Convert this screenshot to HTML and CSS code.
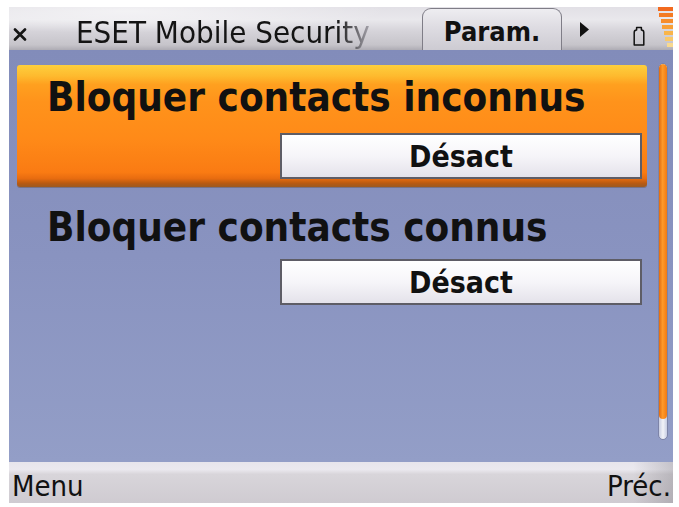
FILE: index.html
```html
<!DOCTYPE html>
<html lang="fr">
<head>
<meta charset="utf-8">
<title>ESET Mobile Security</title>
<link rel="stylesheet" href="styles.css">
</head>
<body>
<div class="screen">
  <header class="titlebar">
    <svg class="close-icon" width="14" height="13" viewBox="0 0 14 13" aria-hidden="true">
      <path d="M2 1.5 L12 11.5 M12 1.5 L2 11.5" stroke="#141414" stroke-width="2.6" stroke-linecap="round"/>
    </svg>
    <span class="app-title">ESET Mobile Security</span>
    <span class="tab">Param.</span>
    <svg class="tab-arrow" width="9" height="15" viewBox="0 0 9 15" aria-hidden="true">
      <path d="M0 0 L9 7.5 L0 15 Z" fill="#111"/>
    </svg>
    <svg class="battery" width="12" height="20" viewBox="0 0 12 20" aria-hidden="true">
      <path d="M1.2 19 V6.5 Q1.2 4 3.6 4 V1.5 H8.4 V4 Q10.8 4 10.8 6.5 V19 Z" fill="none" stroke="#111" stroke-width="1.5" stroke-linejoin="round"/>
    </svg>
    <svg class="signal" width="17" height="42" viewBox="0 0 17 42" aria-hidden="true">
      <rect x="2" y="0" width="15" height="4" fill="#f26a1f"/>
      <rect x="3" y="6" width="14" height="4" fill="#f47b24"/>
      <rect x="5" y="12" width="12" height="4" fill="#f68d2c"/>
      <rect x="6" y="18" width="11" height="4" fill="#f8a036"/>
      <rect x="8" y="24" width="9" height="4" fill="#f9b54a"/>
      <rect x="9" y="30" width="8" height="4" fill="#f9c86a"/>
      <rect x="11" y="36" width="6" height="4" fill="#f8d98f"/>
    </svg>
  </header>

  <main class="content">
    <ul class="settings">
      <li class="setting is-focused">
        <div class="setting-label">Bloquer contacts inconnus</div>
        <div class="setting-value">Désact</div>
      </li>
      <li class="setting">
        <div class="setting-label">Bloquer contacts connus</div>
        <div class="setting-value">Désact</div>
      </li>
    </ul>
    <div class="scrollbar">
      <div class="scroll-thumb"></div>
    </div>
  </main>

  <footer class="softkeys">
    <span class="softkey">Menu</span>
    <span class="softkey">Préc.</span>
  </footer>
</div>
</body>
</html>
```

FILE: styles.css
```css
* {
  box-sizing: border-box;
}

html, body {
  margin: 0;
  padding: 0;
  background: #ffffff;
}

body {
  font-family: "DejaVu Sans Condensed", "DejaVu Sans", "Liberation Sans", sans-serif;
  color: #111111;
}

.screen {
  margin: 7px 0 0 9px;
  width: 664px;
  height: 496px;
  display: flex;
  flex-direction: column;
  overflow: hidden;
}

/* ---- status / title bar ---- */
.titlebar {
  height: 43px;
  flex: none;
  display: flex;
  align-items: center;
  background:
    radial-gradient(ellipse 260px 22px at 120px 4px, rgba(255, 255, 255, 0.55), rgba(255, 255, 255, 0) 100%),
    linear-gradient(to bottom, #e2e0e6 0%, #e9e8ec 30%, #d6d4da 55%, #c6c4ca 88%, #aeacb4 100%);
}

.close-icon {
  margin-left: 4px;
  margin-top: 12px;
  flex: none;
}

.app-title {
  margin-left: 49px;
  margin-top: 6px;
  width: 310px;
  flex: none;
  font-size: 31px;
  line-height: 38px;
  white-space: nowrap;
  background: linear-gradient(to right, #141414 0%, #141414 84%, #9a98a0 94%, #c9c7cd 100%);
  -webkit-background-clip: text;
  background-clip: text;
  color: transparent;
}

.tab {
  align-self: flex-end;
  margin-left: 36px;
  width: 140px;
  height: 42px;
  flex: none;
  display: flex;
  align-items: center;
  justify-content: center;
  padding-top: 4px;
  font-weight: bold;
  font-size: 27px;
  border: 1px solid #7f7d87;
  border-bottom: none;
  border-radius: 9px 9px 0 0;
  background: linear-gradient(to bottom, #eeedf1 0%, #dedce2 45%, #cdcbd2 100%);
}

.tab-arrow {
  margin-left: 18px;
  margin-top: 2px;
  flex: none;
}

.battery {
  margin-left: 44px;
  margin-top: 14px;
  flex: none;
}

.signal {
  margin-left: 11px;
  margin-top: -2px;
  flex: none;
}

/* ---- settings list ---- */
.content {
  flex: 1;
  display: flex;
  gap: 11px;
  padding: 13px 5px 0 8px;
  background: linear-gradient(to bottom, #828cba 0%, #8993c0 50%, #939ec7 100%);
}

.settings {
  list-style: none;
  margin: 2px 0 0;
  padding: 0;
  width: 630px;
  display: flex;
  flex-direction: column;
  gap: 4px;
}

.setting {
  height: 122px;
  padding: 8px 5px 0 30px;
  border-radius: 3px;
}

.setting.is-focused {
  background: linear-gradient(to bottom,
    #fdcf3e 0%, #feba2e 9%, #ffa01f 16%, #ff931b 30%,
    #ff8a18 60%, #fa7b13 88%, #e86c10 93%, #b85a12 97%, #9c5a22 100%);
  box-shadow: 0 1px 0 rgba(90, 60, 40, 0.35);
}

.setting-label {
  font-weight: bold;
  font-size: 40px;
  line-height: 48px;
  white-space: nowrap;
}

.setting:not(.is-focused) .setting-label {
  margin-top: 4px;
}

.setting-value {
  margin: 12px 0 0 233px;
  height: 46px;
  display: flex;
  align-items: center;
  justify-content: center;
  font-weight: bold;
  font-size: 30px;
  border: 2px solid #5e5d66;
  background: linear-gradient(to bottom, #ffffff 0%, #f6f5f9 50%, #e4e2ea 100%);
}

.setting:not(.is-focused) .setting-value {
  margin-top: 8px;
}

/* ---- scroll indicator ---- */
.scrollbar {
  width: 10px;
  height: 377px;
  flex: none;
  border-radius: 5px;
  border: 1px solid #7d84a8;
  background: linear-gradient(to right, #c7cde3, #f2f3f8 50%, #c7cde3);
  overflow: hidden;
}

.scroll-thumb {
  height: 355px;
  border-radius: 4px;
  background: linear-gradient(to right, #e06a10, #ff9a2a 45%, #f07a14);
}

/* ---- softkey bar ---- */
.softkeys {
  height: 41px;
  flex: none;
  display: flex;
  justify-content: space-between;
  align-items: center;
  padding: 6px 2px 0 3px;
  font-size: 29px;
  line-height: 34px;
  background:
    linear-gradient(to right, rgba(0, 0, 0, 0) 94%, rgba(90, 88, 96, 0.25) 100%),
    linear-gradient(to bottom, #e7e5ec 0%, #ebe9ef 18%, #d8d5da 30%, #cfcbd1 100%);
}
```
